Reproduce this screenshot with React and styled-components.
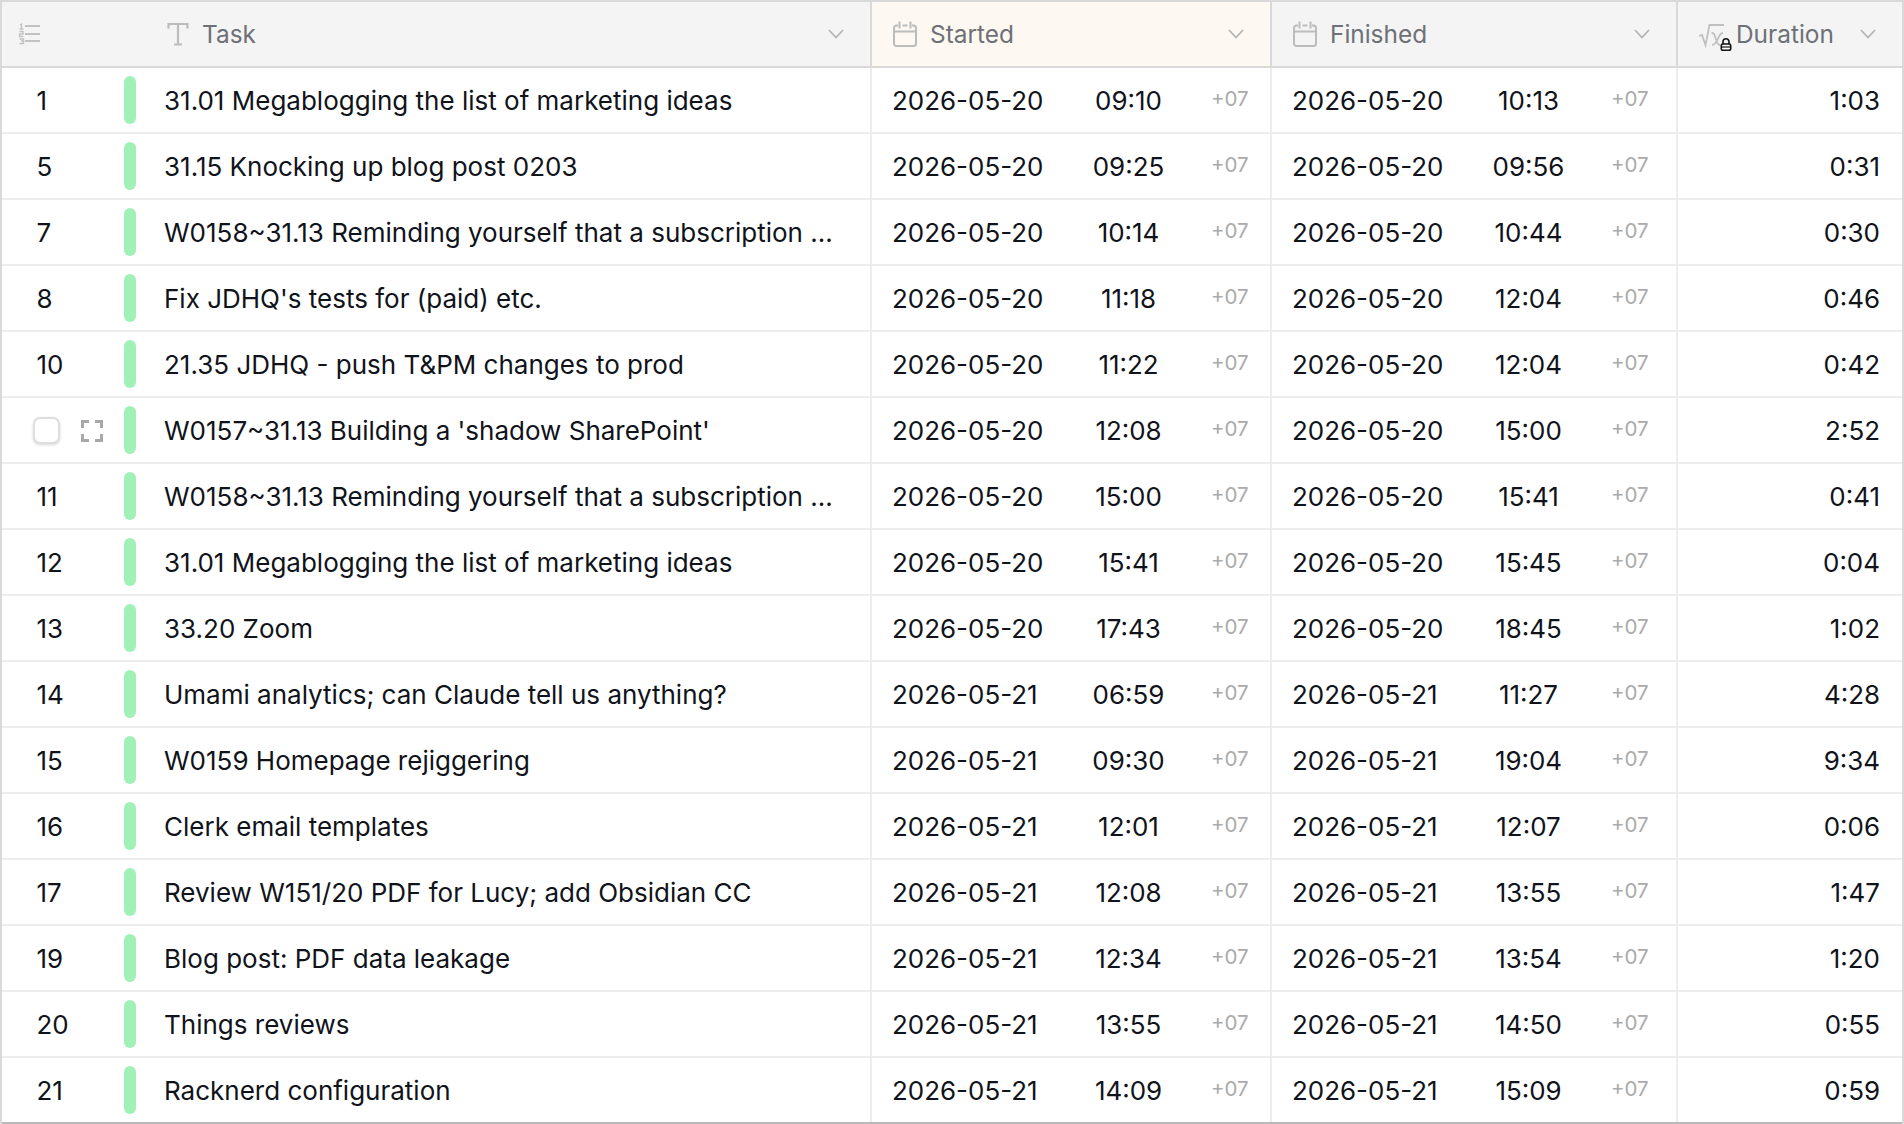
import React from 'react';
import styled, { createGlobalStyle } from 'styled-components';

const Global = createGlobalStyle`
  html, body { margin: 0; padding: 0; background: #fff; }
  * { box-sizing: border-box; }
  body { font-family: Inter, "Liberation Sans", sans-serif; color: #10131a; -webkit-font-smoothing: antialiased; }
`;

const COLS = '870px 400px 406px 1fr';

const Sheet = styled.div`
  width: 1904px; height: 1124px; overflow: hidden;
  border: solid #d9d9d9; border-width: 2px 2px 0 2px;
  background: #fff; display: flex; flex-direction: column;
`;
const HeaderRow = styled.div`
  display: grid; grid-template-columns: ${COLS};
  height: 66px; flex: none; border-bottom: 2px solid #d9d9d9; background: #f4f4f4;
`;
const HeaderCell = styled.div`
  display: flex; align-items: center; padding: 0 25px 0 ${p => p.$pl}px;
  background: ${p => (p.$sorted ? '#fdf8f1' : '#f4f4f4')};
  border-right: ${p => (p.$last ? 'none' : '2px solid #d9d9d9')};
`;
const HeaderLabel = styled.span`
  font-size: 24.400px; color: #6d7076; margin-left: ${p => p.$ml}px; padding-top: 1px; flex: 1; line-height: 1;
`;
const IconSlot = styled.span`
  display: inline-flex; flex: none; color: #bcbcbc;
`;
const IndexHead = styled.div`
  width: 165px; padding-left: 16px; display: flex; align-items: center; color: #c2c2c2;
`;
const Row = styled.div`
  display: grid; grid-template-columns: ${COLS};
  height: 66px; flex: none;
  border-bottom: 2px solid ${p => (p.$last ? '#b9b9b9' : '#ededed')};
`;
const TitleCell = styled.div`
  display: flex; align-items: center; min-width: 0;
  border-right: 2px solid #ededed;
`;
const IndexBox = styled.div`
  width: 122px; flex: none; padding: 2px 0 0 34.500px; font-size: 25.950px; line-height: 1;
  display: flex; align-items: center;
`;
const Checkbox = styled.span`
  width: 27px; height: 27px; flex: none; margin: -2px 0 0 -3.500px; border-radius: 7px; background: #fff;
  border: 2px solid #dedede; box-shadow: 0 1px 3px rgba(0,0,0,.16);
`;
const ExpandIcon = styled.svg`
  width: 22px; height: 22px; flex: none; margin-left: 21px; color: #a8a8a8;
`;
const Bar = styled.span`
  width: 12px; height: 48px; flex: none; border-radius: 6px; background: #a1f0b8;
`;
const TaskText = styled.span`
  margin-left: 28px; padding-top: 2px; font-size: 26px; line-height: 1.2; white-space: nowrap;
`;
const DateCell = styled.div`
  display: grid; grid-template-columns: 154px 165px 35px; align-items: center;
  padding: 2px 0 0 20px; border-right: 2px solid #ededed; font-size: 25.950px; line-height: 1;
`;
const TimeText = styled.span`text-align: center;`;
const Zone = styled.span`
  font-size: 20.500px; color: #aaaaaa; text-align: right; white-space: nowrap;
  position: relative; top: -2px;
`;
const DurationCell = styled.div`
  display: flex; align-items: center; justify-content: flex-end;
  padding: 2px 22px 0 0; font-size: 25.950px; line-height: 1;
`;
const ChevronSvg = styled.svg`
  width: 18px; height: 12px; color: #b4b4b4; flex: none;
`;

const Chevron = () => (
  <ChevronSvg viewBox="0 0 18 12" fill="none" stroke="currentColor" strokeWidth="1.8">
    <path d="M2 2l7 7.500L16 2" />
  </ChevronSvg>
);
const Calendar = () => (
  <svg width="24" height="26" viewBox="0 0 24 26" fill="none" stroke="currentColor" strokeWidth="2">
    <path d="M5 4.500H3.500A2.500 2.500 0 0 0 1 7v15.500A2.500 2.500 0 0 0 3.500 25h17a2.500 2.500 0 0 0 2.500-2.500V7a2.500 2.500 0 0 0-2.500-2.500H19" />
    <path d="M6.500 0.500v7M17.500 0.500v7M9.500 4.500h5M1 10.500h22" />
  </svg>
);
const TextIcon = () => (
  <svg width="22" height="24" viewBox="0 0 22 24" fill="none" stroke="currentColor" strokeWidth="2.200">
    <path d="M1.500 6.500V2h19v4.500M11 2v20M7 22.500h8" />
  </svg>
);
const ListIcon = () => (
  <svg width="24" height="22" viewBox="0 0 24 22" fill="none" stroke="currentColor">
    <path d="M7 3h15M7 11h15M7 18h15" strokeWidth="1.800" />
    <path d="M2 2l1.500-.800V6M1.500 6h4M1.500 8.500h3.500v2.500H1.500V13.500h4M1.500 16h4v2H3M5.500 18v2.500h-4" strokeWidth="1.400" />
  </svg>
);
const FormulaIcon = () => (
  <svg width="36" height="34" viewBox="0 0 36 34" fill="none">
    <path d="M1 19l3-1 3.500 10L11.500 8H26" stroke="#c0c0c0" strokeWidth="1.800" />
    <path d="M13.500 16c2.500 0 3 1 4 5s2 7 4.500 7M25 16c-2.500 0-3.500 2-5 5.500s-3 6.500-6 6.500" stroke="#c0c0c0" strokeWidth="1.800" />
    <path d="M25 27v-2.200a3 3 0 0 1 6 0V27" stroke="#111" strokeWidth="1.600" />
    <rect x="23.300" y="27" width="9.400" height="6.300" rx="1.500" fill="#fff" stroke="#111" strokeWidth="1.600" />
    <path d="M24 30h8" stroke="#111" strokeWidth="1.200" />
  </svg>
);

const rows = [
  ['1', '31.01 Megablogging the list of marketing ideas', '2026-05-20', '09:10', '2026-05-20', '10:13', '1:03'],
  ['5', '31.15 Knocking up blog post 0203', '2026-05-20', '09:25', '2026-05-20', '09:56', '0:31'],
  ['7', 'W0158~31.13 Reminding yourself that a subscription ...', '2026-05-20', '10:14', '2026-05-20', '10:44', '0:30'],
  ['8', "Fix JDHQ's tests for (paid) etc.", '2026-05-20', '11:18', '2026-05-20', '12:04', '0:46'],
  ['10', '21.35 JDHQ - push T&PM changes to prod', '2026-05-20', '11:22', '2026-05-20', '12:04', '0:42'],
  ['', "W0157~31.13 Building a 'shadow SharePoint'", '2026-05-20', '12:08', '2026-05-20', '15:00', '2:52'],
  ['11', 'W0158~31.13 Reminding yourself that a subscription ...', '2026-05-20', '15:00', '2026-05-20', '15:41', '0:41'],
  ['12', '31.01 Megablogging the list of marketing ideas', '2026-05-20', '15:41', '2026-05-20', '15:45', '0:04'],
  ['13', '33.20 Zoom', '2026-05-20', '17:43', '2026-05-20', '18:45', '1:02'],
  ['14', 'Umami analytics; can Claude tell us anything?', '2026-05-21', '06:59', '2026-05-21', '11:27', '4:28'],
  ['15', 'W0159 Homepage rejiggering', '2026-05-21', '09:30', '2026-05-21', '19:04', '9:34'],
  ['16', 'Clerk email templates', '2026-05-21', '12:01', '2026-05-21', '12:07', '0:06'],
  ['17', 'Review W151/20 PDF for Lucy; add Obsidian CC', '2026-05-21', '12:08', '2026-05-21', '13:55', '1:47'],
  ['19', 'Blog post: PDF data leakage', '2026-05-21', '12:34', '2026-05-21', '13:54', '1:20'],
  ['20', 'Things reviews', '2026-05-21', '13:55', '2026-05-21', '14:50', '0:55'],
  ['21', 'Racknerd configuration', '2026-05-21', '14:09', '2026-05-21', '15:09', '0:59'],
];

const DateParts = ({ date, time }) => (
  <DateCell>
    <span>{date}</span>
    <TimeText>{time}</TimeText>
    <Zone>+07</Zone>
  </DateCell>
);

export default function App() {
  return (
    <>
      <Global />
      <Sheet>
        <HeaderRow>
          <HeaderCell $pl={0}>
            <IndexHead><ListIcon /></IndexHead>
            <IconSlot><TextIcon /></IconSlot>
            <HeaderLabel $ml={13}>Task</HeaderLabel>
            <Chevron />
          </HeaderCell>
          <HeaderCell $pl={21} $sorted>
            <IconSlot><Calendar /></IconSlot>
            <HeaderLabel $ml={13}>Started</HeaderLabel>
            <Chevron />
          </HeaderCell>
          <HeaderCell $pl={21}>
            <IconSlot><Calendar /></IconSlot>
            <HeaderLabel $ml={13}>Finished</HeaderLabel>
            <Chevron />
          </HeaderCell>
          <HeaderCell $pl={20} $last>
            <IconSlot><FormulaIcon /></IconSlot>
            <HeaderLabel $ml={2}>Duration</HeaderLabel>
            <Chevron />
          </HeaderCell>
        </HeaderRow>
        {rows.map((r, i) => (
          <Row key={i} $last={i === rows.length - 1}>
            <TitleCell>
              <IndexBox>
                {r[0] || (
                  <>
                    <Checkbox />
                    <ExpandIcon viewBox="0 0 22 22" fill="none" stroke="currentColor" strokeWidth="3">
                      <path d="M1.500 8V1.500H8M14 1.500h6.500V8M20.500 14v6.500H14M8 20.500H1.500V14" />
                    </ExpandIcon>
                  </>
                )}
              </IndexBox>
              <Bar />
              <TaskText>{r[1]}</TaskText>
            </TitleCell>
            <DateParts date={r[2]} time={r[3]} />
            <DateParts date={r[4]} time={r[5]} />
            <DurationCell>{r[6]}</DurationCell>
          </Row>
        ))}
      </Sheet>
    </>
  );
}
